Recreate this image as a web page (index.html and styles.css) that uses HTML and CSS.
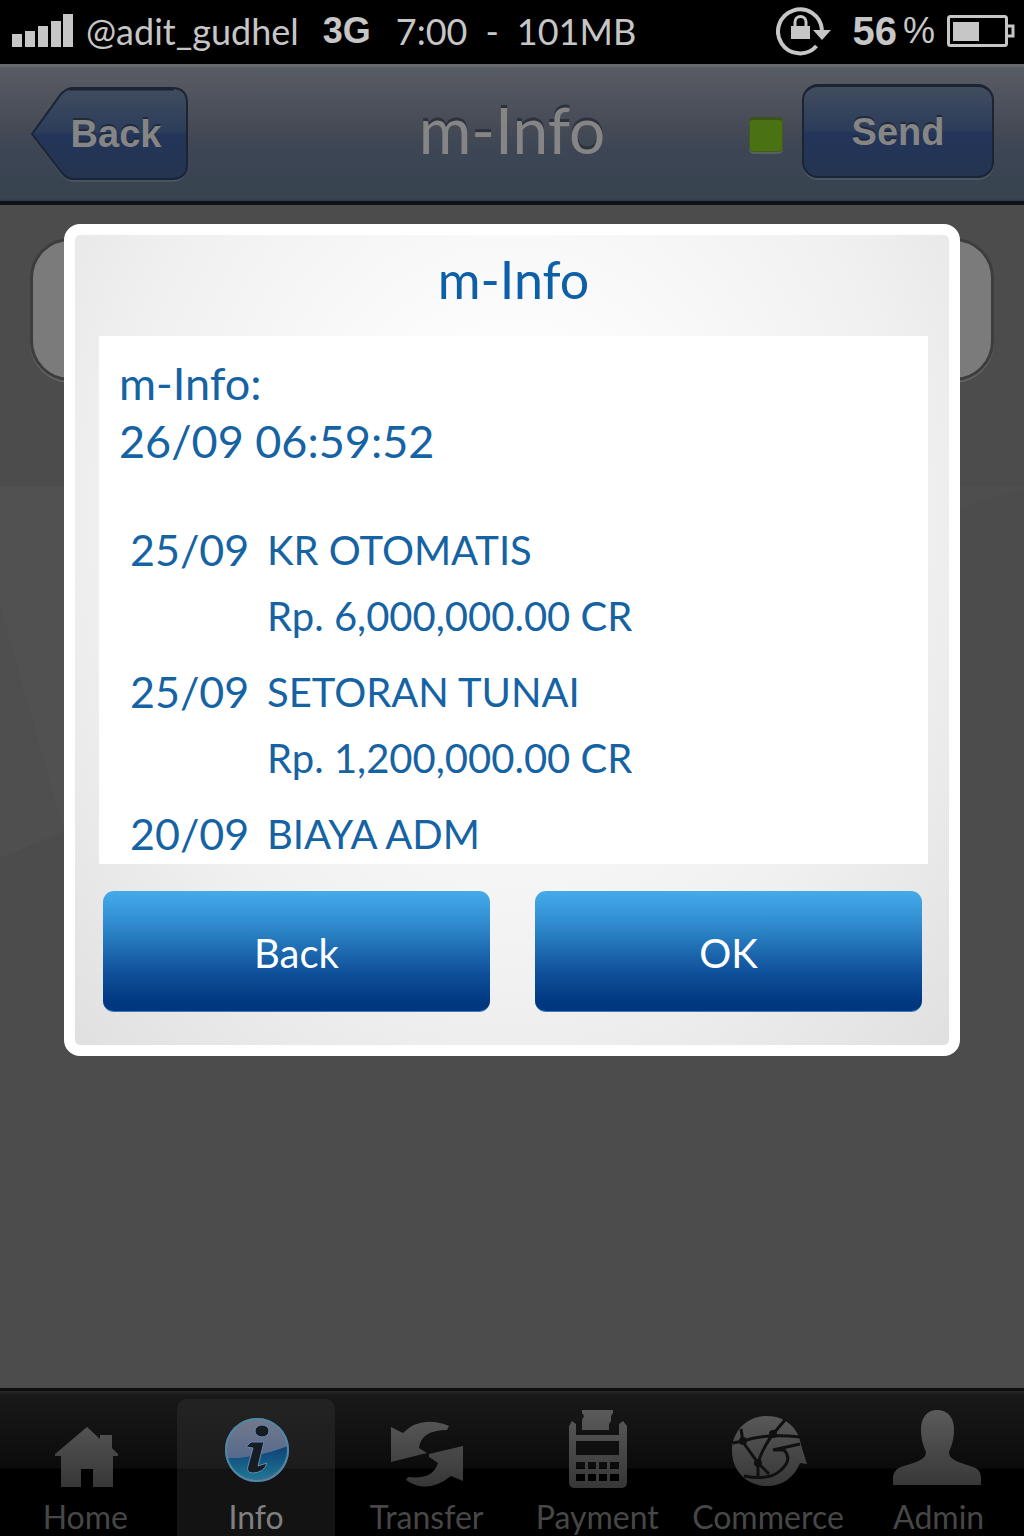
FILE: index.html
```html
<!DOCTYPE html>
<html lang="id">
<head>
<meta charset="utf-8">
<meta name="viewport" content="width=device-width, initial-scale=1">
<title>m-Info</title>
<link rel="stylesheet" href="styles.css">
</head>
<body>
<div class="app">
  <div class="status">
    <svg class="signal" width="62" height="34" viewBox="0 0 62 34" fill="#c6c6c6" aria-hidden="true">
      <path d="M0 20h10v13H0zM13 17h10v16H13zM26 12h10v21H26zM39 7h10v26H39zM51 0h10v33H51z"/>
    </svg>
    <span class="carrier">@adit_gudhel</span>
    <span class="network">3G</span>
    <span class="clock"><span>7:00</span><span>-</span><span>101MB</span></span>
    <svg class="lock" width="56" height="52" viewBox="0 0 56 52" aria-hidden="true">
      <path d="M40.500 41A22 22 0 1 1 46 25" fill="none" stroke="#c6c6c6" stroke-width="4"/>
      <path d="M37 25h18l-9 10z" fill="#c6c6c6"/>
      <path d="M15 21h19v13H15z" fill="#c6c6c6"/>
      <path d="M19 22v-5a5.500 5.500 0 0 1 11 0v5" fill="none" stroke="#c6c6c6" stroke-width="3"/>
    </svg>
    <span class="charge">56</span>
    <span class="percent">%</span>
    <svg class="battery" width="68" height="34" viewBox="0 0 68 34" aria-hidden="true">
      <rect x="1.500" y="2.500" width="58" height="29" rx="2" fill="none" stroke="#c6c6c6" stroke-width="3"/>
      <path d="M60 12h6v10h-6" fill="none" stroke="#c6c6c6" stroke-width="3"/>
      <path d="M6 8h26v19H6z" fill="#c6c6c6"/>
    </svg>
  </div>

  <header class="navbar">
    <div class="nav-side">
      <button class="nav-back" type="button">
        <svg class="back-shape" width="158" height="96" viewBox="0 0 158 96" aria-hidden="true">
          <defs>
            <linearGradient id="backFill" x1="0" y1="0" x2="0" y2="1">
              <stop offset="0" stop-color="#414c5e"/>
              <stop offset="0.49" stop-color="#2b3d5a"/>
              <stop offset="0.51" stop-color="#23355a"/>
              <stop offset="1" stop-color="#243450"/>
            </linearGradient>
          </defs>
          <path d="M2 49 31 9Q37 3 43 3H142Q157 3 157 18V80Q157 95 142 95H43Q37 95 32 89Z" fill="none" stroke="#566272" stroke-width="1"/>
          <path d="M2 48 31 8Q37 2 43 2H142Q157 2 157 17V78Q157 93 142 93H43Q37 93 32 87Z" fill="url(#backFill)" stroke="#1b2433" stroke-width="2"/>
          <path d="M39 3H144" stroke="#1b2433" stroke-width="3"/>
        </svg>
        <span class="back-text">Back</span>
      </button>
    </div>
    <h1 class="nav-title">m-Info</h1>
    <div class="nav-side nav-end">
      <span class="led"></span>
      <button class="nav-send" type="button">Send</button>
    </div>
  </header>

  <main class="stage">
    <svg class="backdrop" viewBox="0 0 1024 1183" preserveAspectRatio="none" aria-hidden="true">
      <path d="M0 281H512V440L0 653Z" fill="#515151"/>
      <path d="M0 400 64 626 0 653Z" fill="#4f4f4f"/>
      <path d="M900 281H1024V284L900 320Z" fill="#4e4e4e"/>
    </svg>
    <div class="field"></div>
    <section class="dialog" role="dialog" aria-labelledby="dialog-title">
      <h2 class="dialog-title" id="dialog-title">m-Info</h2>
      <div class="statement">
        <p class="statement-head">m-Info:</p>
        <p class="statement-head">26/09 06:59:52</p>
        <ul class="entries">
          <li class="entry">
            <span class="date">25/09</span>
            <span>KR OTOMATIS</span>
            <span class="amount">Rp. 6,000,000.00 CR</span>
          </li>
          <li class="entry">
            <span class="date">25/09</span>
            <span>SETORAN TUNAI</span>
            <span class="amount">Rp. 1,200,000.00 CR</span>
          </li>
          <li class="entry">
            <span class="date">20/09</span>
            <span>BIAYA ADM</span>
          </li>
        </ul>
      </div>
      <div class="actions">
        <button class="action" type="button">Back</button>
        <button class="action" type="button">OK</button>
      </div>
    </section>
  </main>

  <nav class="tabs">
    <a class="tab" href="#home">
      <svg width="96" height="84" viewBox="0 0 96 84" aria-hidden="true">
        <defs>
          <linearGradient id="grey" gradientUnits="userSpaceOnUse" x1="0" y1="0" x2="0" y2="84">
            <stop offset="0" stop-color="#5c5c5c"/>
            <stop offset="1" stop-color="#353535"/>
          </linearGradient>
        </defs>
        <path fill="url(#grey)" d="M50 20 63 32V28H75V41L81 47V49H76V80H56V62H44V80H24V49H18V47Z"/>
      </svg>
      <span>Home</span>
    </a>
    <a class="tab active" href="#info">
      <svg width="96" height="84" viewBox="0 0 96 84" aria-hidden="true">
        <defs>
          <linearGradient id="gloss" x1="0" y1="0" x2="0" y2="1">
            <stop offset="0" stop-color="#74798a"/>
            <stop offset="1" stop-color="#46618f"/>
          </linearGradient>
          <linearGradient id="deep" x1="0" y1="0" x2="0" y2="1">
            <stop offset="0" stop-color="#103f78"/>
            <stop offset="1" stop-color="#1c7892"/>
          </linearGradient>
        </defs>
        <circle cx="49" cy="43" r="32" fill="url(#gloss)"/>
        <path d="M18 51Q46 52 80 39A32 32 0 0 1 18 51Z" fill="url(#deep)"/>
        <circle cx="49" cy="43" r="31" fill="none" stroke="#4d88a5" stroke-width="2"/>
        <g fill="#171b22" stroke="#6489b4" stroke-width="1">
          <ellipse cx="54" cy="24" rx="7" ry="6"/>
          <path d="M38 40 43 35H56L50 59 59 56Q56 66 44 66 38 65 40 59L45 41Z"/>
        </g>
      </svg>
      <span>Info</span>
    </a>
    <a class="tab" href="#transfer">
      <svg width="96" height="84" viewBox="0 0 96 84" fill="url(#grey)" aria-hidden="true">
        <path d="M12 20 24 26Q42 8 70 19L68 23Q42 23 40 41L48 46 12 55Z"/>
        <path d="M84 39V74L72 69Q48 88 27 73L29 70Q54 73 59 56L50 50V47Z"/>
      </svg>
      <span>Transfer</span>
    </a>
    <a class="tab" href="#payment">
      <svg width="96" height="84" viewBox="0 0 96 84" fill="url(#grey)" aria-hidden="true">
        <path d="M33 3H64V6L62 9V14L60 17V23H33V13L35 9 33 6Z"/>
        <path fill-rule="evenodd" d="M20 19 23 14 27 17V28H70V17L74 14 78 19V75Q78 81 72 81H26Q20 81 20 75ZM27 34V48H70V34ZM27 55V62H36V55ZM39 55V62H47V55ZM50 55V62H58V55ZM61 55V62H70V55ZM27 67V74H36V67ZM39 67V74H47V67ZM50 67V74H58V67ZM61 67V74H70V67Z"/>
      </svg>
      <span>Payment</span>
    </a>
    <a class="tab" href="#commerce">
      <svg width="96" height="84" viewBox="0 0 96 84" aria-hidden="true">
        <path fill="url(#grey)" d="M47 9C66 9 79 22 81 38L87 57 80 56C74 71 62 79 47 79 27 79 12 64 12 44S27 9 47 9Z"/>
        <path fill="none" stroke="#101010" stroke-width="3" d="M21 22 23 35Q28 42 38 56L49 67M65 13 53 27Q42 42 38 56V69M13 36 23 34Q46 26 80 30M24 69Q50 74 61 63 73 52 64 43L53 43 80 37"/>
        <circle cx="23" cy="34" r="4" fill="#101010"/>
        <circle cx="53" cy="27" r="4" fill="#101010"/>
        <circle cx="38" cy="56" r="4" fill="#101010"/>
      </svg>
      <span>Commerce</span>
    </a>
    <a class="tab" href="#admin">
      <svg width="96" height="84" viewBox="0 0 96 84" fill="url(#grey)" aria-hidden="true">
        <path d="M46 3C56 3 63 10 63 22 63 34 60 40 58 45 58 53 68 55 82 60 88 62 90 66 90 71V78H2V71C2 66 5 62 10 60 25 55 35 53 35 45 32 38 30 32 30 22 30 10 37 3 46 3Z"/>
      </svg>
      <span>Admin</span>
    </a>
  </nav>
</div>
</body>
</html>
```
FILE: styles.css
```css
* {
  box-sizing: border-box;
}

body {
  margin: 0;
  background: #4c4c4c;
  font-family: Lato, "Noto Sans", sans-serif;
}

h1, h2, p, ul {
  margin: 0;
  padding: 0;
}

button {
  border: 0;
  padding: 0;
  cursor: pointer;
}

svg {
  display: block;
}

.app {
  display: flex;
  flex-direction: column;
  min-height: 100vh;
}

/* Status bar */
.status {
  display: flex;
  align-items: center;
  height: 64px;
  padding: 0 9px 2px 12px;
  background: #000;
  color: #c6c6c6;
  font-size: 36px;
  line-height: 40px;
}

.carrier {
  margin-left: 12px;
}

.network {
  margin-left: 24px;
  font-family: "Liberation Sans", sans-serif;
  font-weight: 700;
}

.clock {
  display: flex;
  gap: 18px;
  margin-left: 25px;
  margin-right: auto;
}

.charge {
  margin-left: 20px;
  font: 700 40px/40px "Liberation Sans", sans-serif;
}

.percent {
  margin: 0 12px 0 6px;
  font-family: "Liberation Sans", sans-serif;
}

/* Navigation bar */
.navbar {
  display: grid;
  grid-template-columns: 1fr auto 1fr;
  align-items: center;
  height: 141px;
  padding: 0 30px;
  border-top: 3px solid #68696d;
  border-bottom: 4px solid #0e1119;
  background: linear-gradient(#595c64, #454a55 46%, #3e4655 60%, #37434f 98%, #2d3948);
}

.nav-side {
  display: flex;
  align-items: center;
}

.nav-end {
  justify-content: flex-end;
  gap: 19px;
}

.nav-title {
  margin-bottom: 8px;
  color: #858585;
  font-size: 64px;
  font-weight: 400;
  line-height: 64px;
  text-shadow: 0 -3px 0 #2c323d;
}

.nav-back,
.nav-send {
  color: #858585;
  font: 700 38px/44px "Liberation Sans", sans-serif;
  text-shadow: 0 -2px 0 #202a3b;
}

.nav-back {
  display: grid;
  place-items: center;
  background: none;
}

.back-shape,
.back-text {
  grid-area: 1 / 1;
}

.back-text {
  padding-left: 14px;
}

.nav-send {
  width: 192px;
  height: 94px;
  margin-bottom: 6px;
  border: 2px solid #1b2433;
  border-top-width: 3px;
  border-radius: 16px;
  background: linear-gradient(#414c5e, #2b3d5a 49%, #23355a 51%, #243450);
  box-shadow: 0 2px 0 #4b5664;
}

.led {
  width: 34px;
  height: 35px;
  border: 1px solid #415a20;
  border-top: 3px solid #3a531b;
  border-radius: 5px;
  background: #4b7212;
  box-shadow: 0 2px 0 #56645e;
}

/* Stage: the page and the dialog share one grid cell */
.stage {
  display: grid;
  flex: 1;
  grid-template-columns: 1fr;
  align-items: start;
}

.backdrop,
.field,
.dialog {
  grid-area: 1 / 1;
}

.backdrop {
  width: 100%;
  height: 100%;
}

.field {
  height: 143px;
  margin: 33px 30px;
  border: 3px solid #3d3d3d;
  border-radius: 40px;
  background: #7b7b7b;
  box-shadow: 0 2px 0 #636363;
}

.dialog {
  margin: 19px 64px 32px;
  padding: 14px 21px 33px 24px;
  border: 11px solid #fff;
  border-radius: 16px;
  background: radial-gradient(ellipse at 50% 35%, #fff 15%, #f0f0f0 65%, #e0e0e0);
  color: #1663a4;
}

.dialog-title {
  font-size: 52px;
  font-weight: 400;
  line-height: 60px;
  text-align: center;
  color: #0d5fa8;
}

.statement {
  height: 528px;
  margin-top: 27px;
  padding: 18px 20px 0;
  overflow-y: auto;
  scrollbar-width: none;
  background: #fff;
}

.statement-head {
  font-size: 45px;
  line-height: 58px;
}

.entries {
  display: grid;
  gap: 16px;
  margin-top: 50px;
  padding-left: 11px;
  list-style: none;
  font-size: 40px;
  line-height: 60px;
}

.entry {
  display: grid;
  grid-template-columns: 137px 1fr;
  row-gap: 6px;
}

.date {
  font-size: 43px;
}

.amount {
  grid-column: 2;
}

.actions {
  display: grid;
  grid-template-columns: 1fr 1fr;
  gap: 45px;
  margin-top: 27px;
  padding: 0 6px 0 4px;
}

.action {
  height: 121px;
  padding-top: 4px;
  border-bottom: 1px solid #3a78bd;
  border-radius: 11px;
  background: linear-gradient(#44abeb, #3290d2 24%, #0f509a 68%, #00377f 94%);
  color: #fff;
  font: 400 40px/48px Lato, sans-serif;
}

/* Tab bar */
.tabs {
  display: grid;
  grid-template-columns: repeat(6, 1fr);
  height: 148px;
  overflow: hidden;
  border-top: 3px solid #0e0e0e;
  background: linear-gradient(#292929, #191919 4px, #0b0b0b 77px, #000 78px);
}

.tab {
  display: flex;
  flex-direction: column;
  align-items: center;
  gap: 8px;
  margin: 8px 6px 0;
  padding-top: 8px;
  border-radius: 10px 10px 0 0;
  color: #474747;
  font-size: 32px;
  line-height: 36px;
  text-decoration: none;
}

.tab.active {
  background: linear-gradient(#232323, #1c1c1c 69px, #131313 70px);
  color: #808080;
}
```
